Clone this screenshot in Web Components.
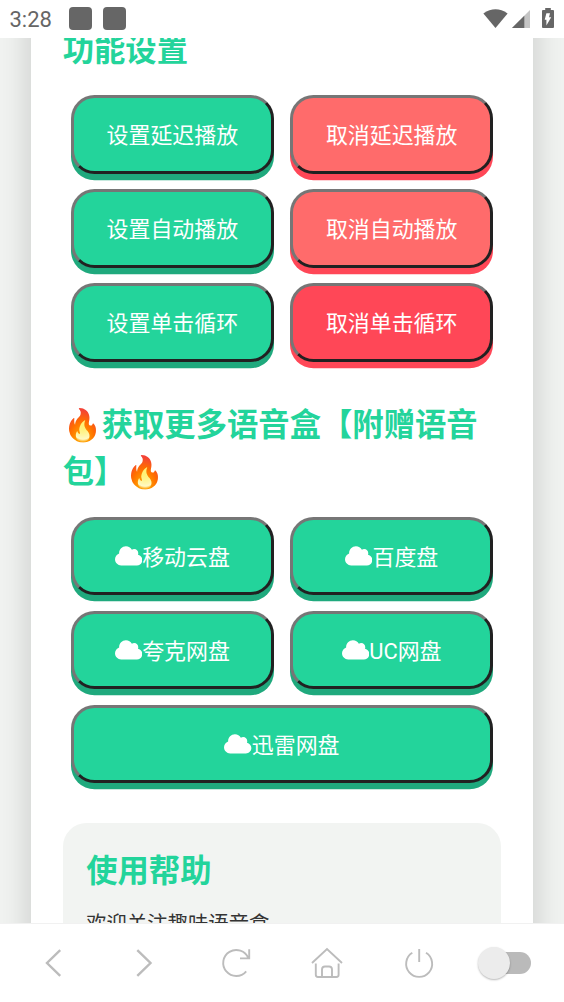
<!DOCTYPE html>
<html lang="zh-CN">
<head>
<meta charset="utf-8">
<title>语音盒</title>
<style>
  html, body { height: 100%; }

  body {
    margin: 0;
    display: flex;
    flex-direction: column;
    overflow: hidden;
    background: #f1f3f1;
    font-family: Roboto, "Noto Sans CJK SC", sans-serif;
    --green: #23d49b;
    --green-dark: #1fa97d;
    --red: #ff6b6b;
    --red-dark: #ff4757;
  }
</style>
</head>
<body>
  <status-bar time="3:28"></status-bar>

  <page-card>
    <section-title>功能设置</section-title>
    <button-grid>
      <push-button>设置延迟播放</push-button>
      <push-button kind="cancel">取消延迟播放</push-button>
      <push-button>设置自动播放</push-button>
      <push-button kind="cancel">取消自动播放</push-button>
      <push-button>设置单击循环</push-button>
      <push-button kind="active">取消单击循环</push-button>
    </button-grid>

    <section-title style="margin-top: 40.5px">🔥获取更多语音盒【附赠语音包】🔥</section-title>
    <button-grid style="margin-top: 20.8px">
      <push-button icon>移动云盘</push-button>
      <push-button icon>百度盘</push-button>
      <push-button icon>夸克网盘</push-button>
      <push-button icon>UC网盘</push-button>
      <push-button icon wide>迅雷网盘</push-button>
    </button-grid>

    <help-box>
      <section-title slot="title">使用帮助</section-title>
      欢迎关注趣味语音盒
    </help-box>
  </page-card>

  <nav-bar></nav-bar>

<script>
class StatusBar extends HTMLElement {
  connectedCallback() {
    this.attachShadow({ mode: 'open' }).innerHTML = `
      <style>
        :host {
          display: flex;
          align-items: center;
          flex: none;
          height: 37.5px;
          box-sizing: border-box;
          padding: 0 9.5px;
          background: #fff;
          color: #666;
          font-size: 22px;
          position: relative;
          z-index: 1;
        }
        .time { margin: 2px 17px 0 0; line-height: 26px; }
        .app { width: 23.5px; height: 23px; margin: 0 10.5px 1px 0; border-radius: 4px; background: #666; }
        svg { display: block; fill: #666; }
        .wifi { margin-left: auto; }
        .signal { margin: 1px 0 0 4px; }
        .battery { margin: 0 0.5px 2px 12px; }
      </style>
      <span class="time">${this.getAttribute('time')}</span>
      <span class="app"></span>
      <span class="app"></span>
      <svg class="wifi" width="25" height="19" viewBox="0 0 25 19"><path d="M0.4 4.4 Q12.5 -4 24.6 4.4 L12.5 19Z"/></svg>
      <svg class="signal" width="18" height="18" viewBox="0 0 18 18">
        <path d="M18 0V18H0Z" fill="#c4c4c4"/>
        <path d="M12.3 5.7V18H0Z"/>
      </svg>
      <svg class="battery" width="12" height="20" viewBox="0 0 12 20">
        <path d="M3.2 0H8.8V2H11Q12 2 12 3V19Q12 20 11 20H1Q0 20 0 19V3Q0 2 1 2H3.2Z"/>
        <path d="M4.4 5.2H8L7 9.3H9.2L4.4 17.6V11.8H2.7Z" fill="#fff"/>
      </svg>
    `;
  }
}

class PageCard extends HTMLElement {
  connectedCallback() {
    this.attachShadow({ mode: 'open' }).innerHTML = `
      <style>
        :host {
          display: block;
          flex: 1;
          min-height: 0;
          overflow: hidden;
        }
        /* scrolled: the card runs on above and below the viewport */
        .card {
          height: calc(100% + 200px);
          box-sizing: border-box;
          margin: -100px 31.3px 0;
          padding: 89.3px 31.4px 0;
          background: #fff;
          box-shadow: 0 0 31.3px rgba(0, 0, 0, 0.18);
        }
      </style>
      <div class="card"><slot></slot></div>
    `;
  }
}

class SectionTitle extends HTMLElement {
  connectedCallback() {
    this.attachShadow({ mode: 'open' }).innerHTML = `
      <style>
        :host { display: block; }
        h2 {
          margin: 0;
          font-size: 31.33px;
          line-height: 47px;
          font-weight: 700;
          color: var(--green);
        }
      </style>
      <h2><slot></slot></h2>
    `;
  }
}

class ButtonGrid extends HTMLElement {
  connectedCallback() {
    this.attachShadow({ mode: 'open' }).innerHTML = `
      <style>
        :host {
          display: grid;
          grid-template-columns: 1fr 1fr;
          gap: 15.67px;
          margin: 21.7px 7.83px 0;
        }
      </style>
      <slot></slot>
    `;
  }
}

class PushButton extends HTMLElement {
  connectedCallback() {
    const cloud = this.hasAttribute('icon')
      ? '<svg viewBox="0 0 640 512"><path d="M0 336c0 79.5 64.5 144 144 144H512c70.7 0 128-57.3 128-128c0-61.9-44-113.6-102.4-125.4c4.1-10.7 6.4-22.4 6.4-34.6c0-53-43-96-96-96c-19.7 0-38.1 6-53.3 16.2C367 64.2 315.3 32 256 32C167.6 32 96 103.6 96 192c0 2.7 .1 5.4 .2 8.1C40.2 219.8 0 273.2 0 336z"/></svg>'
      : '';
    this.attachShadow({ mode: 'open' }).innerHTML = `
      <style>
        :host { display: block; --face: var(--green); --edge: var(--green-dark); }
        :host([kind="cancel"]) { --face: var(--red); --edge: var(--red-dark); }
        :host([kind="active"]) { --face: var(--red-dark); --edge: var(--red-dark); }
        :host([wide]) { grid-column: 1 / -1; }
        button {
          display: flex;
          align-items: center;
          justify-content: center;
          width: 100%;
          height: 78.33px;
          box-sizing: border-box;
          padding: 2px 0 0;
          border: 3px solid;
          border-color: #767676 #212121 #212121 #767676;
          border-radius: 23.5px;
          background: var(--face);
          box-shadow: 0 6.27px 0 var(--edge);
          color: #fff;
          font-family: inherit;
          font-size: 21.93px;
          line-height: 33px;
        }
        svg { width: 27.4px; height: 21.9px; margin-bottom: 3.5px; fill: #fff; }
      </style>
      <button>${cloud}<slot></slot></button>
    `;
  }
}

class HelpBox extends HTMLElement {
  connectedCallback() {
    this.attachShadow({ mode: 'open' }).innerHTML = `
      <style>
        :host {
          display: block;
          margin-top: 39.3px;
          padding: 25.5px 23.5px 23.5px;
          border-radius: 23.5px;
          background: #f2f4f2;
          color: #333;
        }
        p { margin: 13px 0 0; height: 90px; font-size: 20.37px; line-height: 33px; }
      </style>
      <slot name="title"></slot>
      <p><slot></slot></p>
    `;
  }
}

class NavBar extends HTMLElement {
  connectedCallback() {
    this.attachShadow({ mode: 'open' }).innerHTML = `
      <style>
        :host {
          display: grid;
          grid-template-columns: repeat(6, 91.4px);
          justify-content: center;
          align-items: center;
          justify-items: center;
          flex: none;
          height: 79px;
          box-sizing: border-box;
          padding-right: 1px;
          border-top: 1px solid #f1f1f1;
          background: #fff;
          position: relative;
          z-index: 1;
        }
        svg { display: block; fill: none; stroke: #bcbcbc; stroke-width: 1.9; }
        .toggle {
          display: flex;
          align-items: center;
          width: 47px;
          height: 22px;
          margin-right: 4px;
          border-radius: 11px;
          background: linear-gradient(90deg, transparent 20px, #bababa 20px);
        }
        .knob {
          width: 32px;
          height: 32px;
          flex: none;
          margin-left: -6px;
          border-radius: 50%;
          background: #ececec;
          box-shadow: 0 1px 2px rgba(0, 0, 0, 0.28);
        }
      </style>
      <svg width="32" height="32" viewBox="0 0 32 32"><path d="M23.2 3.2 10 16 23.2 28.8" stroke-width="2.4"/></svg>
      <svg width="32" height="32" viewBox="0 0 32 32"><path d="M9.3 3.2 22.5 16 9.3 28.8" stroke-width="2.4"/></svg>
      <svg width="32" height="32" viewBox="0 0 32 32">
        <path d="M26.2 24.3A13 13 0 1 1 28.3 11.2M29.2 2.2V11.4H20"/>
      </svg>
      <svg width="32" height="32" viewBox="0 0 32 32">
        <path d="M1 16 16 2 31 16M4.8 16.5V27.8Q4.8 30 7 30H25.4Q27.6 30 27.6 27.8V16.5M11 30V22.5Q11 19.5 14 19.5H18Q21 19.5 21 22.5V30"/>
      </svg>
      <svg width="32" height="32" viewBox="0 0 32 32"><path d="M9.3 5.8A13 13 0 1 0 23 5.8M16.2 2V15"/></svg>
      <span class="toggle"><span class="knob"></span></span>
    `;
  }
}

customElements.define('status-bar', StatusBar);
customElements.define('page-card', PageCard);
customElements.define('section-title', SectionTitle);
customElements.define('button-grid', ButtonGrid);
customElements.define('push-button', PushButton);
customElements.define('help-box', HelpBox);
customElements.define('nav-bar', NavBar);
</script>
</body>
</html>
